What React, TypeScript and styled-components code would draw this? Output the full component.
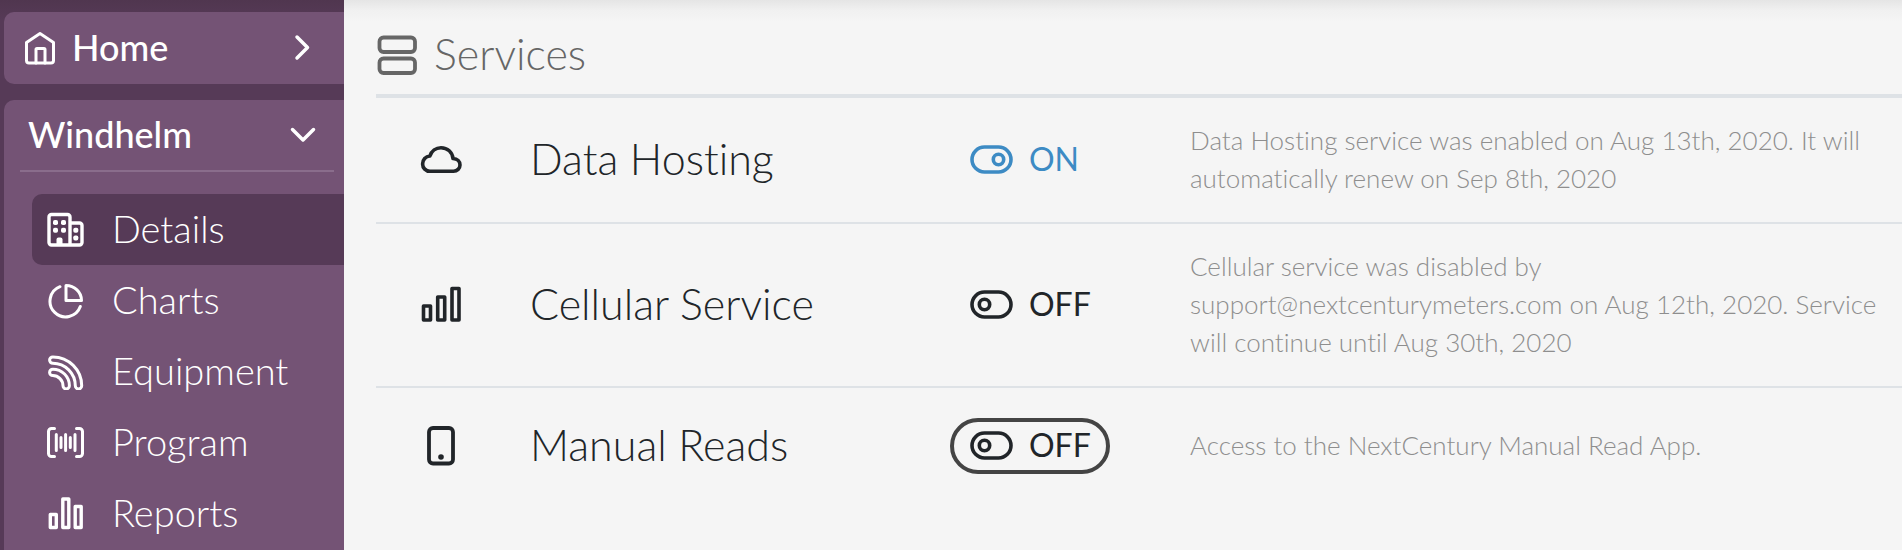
import React, { useState } from 'react';
import styled, { createGlobalStyle } from 'styled-components';

const color = {
  plum: '#563a57',
  mauve: '#745375',
  rule: '#8a6d8c',
  page: '#f5f5f5',
  border: '#dee2e6',
  ink: '#212529',
  heading: '#666666',
  muted: '#8e8e8e',
  on: '#3d8bc4',
  focus: '#444444',
};

const GlobalStyle = createGlobalStyle`
  *, *::before, *::after { box-sizing: border-box; }
  body {
    margin: 0;
    background: ${color.page};
    color: ${color.ink};
    font-family: Lato, "Open Sans", sans-serif;
    font-weight: 300;
    font-variant-ligatures: none;
  }
`;

const Page = styled.div`
  display: flex;
  min-height: 100vh;
`;

const Sidebar = styled.nav`
  flex: 0 0 344px;
  display: flex;
  flex-direction: column;
  gap: 16px;
  padding: 12px 0 0 4px;
  background: linear-gradient(#50364f, ${color.plum} 20px);
  color: #ffffff;
`;

const HomeLink = styled.a`
  display: flex;
  align-items: center;
  gap: 16px;
  height: 72px;
  padding: 0 34px 0 20px;
  border-radius: 10px 0 0 10px;
  background: ${color.mauve};
  color: inherit;
  font-size: 36px;
  font-weight: 500;
  text-decoration: none;
`;

const Label = styled.span<{ $grow?: boolean }>`
  flex: ${(p) => (p.$grow ? 1 : 'none')};
  padding-bottom: 3px;
`;

const Group = styled.section`
  flex: 1;
  border-radius: 10px 0 0 0;
  background: ${color.mauve};
`;

const GroupToggle = styled.button`
  display: flex;
  align-items: center;
  width: calc(100% - 26px);
  height: 72px;
  margin: 0 10px 22px 16px;
  padding: 0 17px 0 8px;
  border: 0;
  border-bottom: 2px solid ${color.rule};
  background: none;
  color: inherit;
  font-family: inherit;
  font-size: 36px;
  font-weight: 500;
  text-align: left;
  cursor: pointer;
`;

const NavList = styled.ul`
  margin: 0;
  padding: 0 0 0 28px;
  list-style: none;
`;

const NavLink = styled.a<{ $active?: boolean }>`
  display: flex;
  align-items: center;
  gap: 27px;
  height: 71px;
  padding: 0 13px;
  border-radius: 10px 0 0 10px;
  background: ${(p) => (p.$active ? color.plum : 'transparent')};
  color: inherit;
  font-size: 38px;
  text-decoration: none;
`;

const Main = styled.main`
  flex: 1;
  min-width: 0;
  padding: 18px 0 0 32px;
  background: linear-gradient(#e5e5e5, #f0f0f0 10px, ${color.page} 22px);
`;

const Heading = styled.h1`
  display: flex;
  align-items: center;
  gap: 16px;
  height: 80px;
  margin: 0;
  padding-bottom: 2px;
  border-bottom: 4px solid ${color.border};
  color: ${color.heading};
  font-size: 43px;
  font-weight: 300;
`;

const ServiceTable = styled.table`
  width: 100%;
  border-collapse: separate;
  border-spacing: 0;
  table-layout: fixed;
`;

const ServiceRow = styled.tr`
  height: 116px;
  &:not(:last-child) > * {
    border-bottom: 2px solid ${color.border};
  }
`;

const IconCell = styled.td`
  width: 130px;
  padding: 0;
  text-align: center;
  svg {
    display: block;
    margin: 0 auto;
  }
`;

const NameCell = styled.th`
  width: 420px;
  padding: 0 24px 4px;
  font-size: 43px;
  font-weight: 300;
  text-align: left;
`;

const StatusCell = styled.td`
  width: 240px;
  padding: 0 24px;
`;

const DetailCell = styled.td`
  padding: 23px 12px 25px 24px;
  color: ${color.muted};
  font-size: 26px;
  line-height: 38px;
`;

const Switch = styled.button<{ $on: boolean; $outlined?: boolean }>`
  display: flex;
  align-items: center;
  gap: 15px;
  width: 160px;
  height: 56px;
  padding: 0 16px;
  border: 4px solid ${(p) => (p.$outlined ? color.focus : 'transparent')};
  border-radius: 28px;
  background: none;
  color: ${(p) => (p.$on ? color.on : color.ink)};
  font-family: inherit;
  font-size: 32px;
  font-weight: 400;
  cursor: pointer;
`;

const Glyph = styled.svg<{ $weight?: number }>`
  flex: none;
  fill: none;
  stroke: currentColor;
  stroke-width: ${(p) => p.$weight ?? 3};
  stroke-linecap: round;
  stroke-linejoin: round;
`;

const HomeIcon = () => (
  <Glyph width="32" height="34" viewBox="0 0 32 34" aria-hidden="true">
    <path d="M2.500 11.500 16 2.500l13.500 9V29.500a2.500 2.500 0 0 1-2.500 2.500H5a2.500 2.500 0 0 1-2.500-2.500Z" />
    <path d="M12 32V18.500a1 1 0 0 1 1-1h7a1 1 0 0 1 1 1V32" />
  </Glyph>
);

const ChevronRight = () => (
  <Glyph $weight={3.5} width="16" height="28" viewBox="0 0 16 28" aria-hidden="true">
    <path d="M3 3 13.500 13.500 3 24" />
  </Glyph>
);

const ChevronDown = () => (
  <Glyph $weight={3.5} width="28" height="16" viewBox="0 0 28 16" aria-hidden="true">
    <path d="M3.500 2.500 14 13 24.500 2.500" />
  </Glyph>
);

const BuildingIcon = () => (
  <Glyph $weight={3.4} width="40" height="36" viewBox="0 0 40 36" aria-hidden="true">
    <path d="M25 33H6.500A2.500 2.500 0 0 1 4 30.500V5A2.500 2.500 0 0 1 6.500 2.500H22.500A2.500 2.500 0 0 1 25 5Zm0-22h9.500A2.500 2.500 0 0 1 37 13.500v17a2.500 2.500 0 0 1-2.500 2.500H25" />
    <path
      d="M11.500 34v-6.500a2 2 0 0 1 2-2h2a2 2 0 0 1 2 2V34Z"
      fill="currentColor"
      stroke="none"
    />
    <g fill="currentColor" stroke="none">
      <rect x="8" y="8" width="5" height="5" rx="1.800" />
      <rect x="16" y="8" width="5" height="5" rx="1.800" />
      <rect x="8" y="15.800" width="5" height="5" rx="1.800" />
      <rect x="16" y="15.800" width="5" height="5" rx="1.800" />
      <rect x="28.300" y="15.800" width="5" height="5" rx="1.800" />
      <rect x="28.300" y="23.500" width="5" height="5" rx="1.800" />
    </g>
  </Glyph>
);

const PieIcon = () => (
  <Glyph width="40" height="36" viewBox="0 0 40 36" aria-hidden="true">
    <path d="M15 3.700A15.600 15.600 0 1 0 35.300 23.500" />
    <path d="M21 2.500V17.500h15.500A15.500 15 0 0 0 21 2.500Z" />
  </Glyph>
);

const SignalIcon = () => (
  <Glyph width="40" height="36" viewBox="0 0 40 36" aria-hidden="true">
    <path d="M7.800 2.900A28.900 28.900 0 0 1 36.700 31.800a3.200 3.200 0 0 1-6.400 0A22.500 22.500 0 0 0 7.800 9.300a3.200 3.200 0 0 1 0-6.400Z" />
    <path d="M7.800 15.200A16.600 16.600 0 0 1 24.400 31.800a3.200 3.200 0 0 1-6.400 0A10.200 10.200 0 0 0 7.800 21.600a3.200 3.200 0 0 1 0-6.400Z" />
  </Glyph>
);

const BarcodeIcon = () => (
  <Glyph width="40" height="36" viewBox="0 0 40 36" aria-hidden="true">
    <path d="M9.500 3.500H6.500A3 3 0 0 0 3.500 6.500v22a3 3 0 0 0 3 3h3M31.500 3.500h3a3 3 0 0 1 3 3v22a3 3 0 0 1-3 3h-3M11.300 9.500v16M16 12.500v10M20.600 9.500v16M25.300 12.500v10M30 9.500v16" />
  </Glyph>
);

const ReportIcon = () => (
  <Glyph $weight={3.4} width="40" height="36" viewBox="0 0 40 36" aria-hidden="true">
    <path d="M5.300 18.500h6V31.500h-6ZM17.800 3h6v28.500h-6ZM30.200 10.500h6v21h-6Z" />
  </Glyph>
);

const ServerIcon = () => (
  <Glyph $weight={3.8} width="42" height="40" viewBox="0 0 42 40" aria-hidden="true">
    <rect x="3.500" y="2.500" width="35.500" height="14.500" rx="4" />
    <rect x="3.500" y="23.500" width="35.500" height="14.500" rx="4" />
  </Glyph>
);

const CloudIcon = () => (
  <Glyph $weight={3.6} width="44" height="30" viewBox="0 0 44 30" aria-hidden="true">
    <path d="M11 26.300C6.800 26.300 3.600 23 3.600 18.900 3.600 14.800 6.600 11.300 10.900 11 12.500 6 17 2.700 22 2.700 28.500 2.700 33.500 7.200 34 13.500 38.500 13.700 41 16.500 41 19.900 41 23.300 38.200 26.300 34.500 26.300Z" />
  </Glyph>
);

const BarsIcon = () => (
  <Glyph $weight={3.6} width="42" height="38" viewBox="0 0 42 38" aria-hidden="true">
    <path d="M3.500 20h7v14h-7ZM17.700 11h7v23h-7ZM32 2.500h7v31.500h-7Z" />
  </Glyph>
);

const PhoneIcon = () => (
  <Glyph $weight={3.800} width="30" height="40" viewBox="0 0 30 40" aria-hidden="true">
    <rect x="3" y="2" width="24" height="35.500" rx="4" />
    <circle cx="15" cy="31" r="2.800" fill="currentColor" stroke="none" />
  </Glyph>
);

const SwitchIcon = ({ on }: { on: boolean }) => (
  <Glyph $weight={3.6} width="44" height="30" viewBox="0 0 44 30" aria-hidden="true">
    <rect x="2" y="2" width="39" height="25" rx="12.500" />
    <circle cx={on ? 28.5 : 14.5} cy="14.500" r="5.200" />
  </Glyph>
);

const navItems = [
  { label: 'Details', Icon: BuildingIcon },
  { label: 'Charts', Icon: PieIcon },
  { label: 'Equipment', Icon: SignalIcon },
  { label: 'Program', Icon: BarcodeIcon },
  { label: 'Reports', Icon: ReportIcon },
];

const services = [
  {
    name: 'Data Hosting',
    Icon: CloudIcon,
    enabled: true,
    detail: 'Data Hosting service was enabled on Aug 13th, 2020. It will automatically renew on Sep 8th, 2020',
  },
  {
    name: 'Cellular Service',
    Icon: BarsIcon,
    enabled: false,
    detail:
      'Cellular service was disabled by support@nextcenturymeters.com on Aug 12th, 2020. Service will continue until Aug 30th, 2020',
  },
  {
    name: 'Manual Reads',
    Icon: PhoneIcon,
    enabled: false,
    outlined: true,
    detail: 'Access to the NextCentury Manual Read App.',
  },
];

export default function App() {
  const [enabled, setEnabled] = useState(services.map((s) => s.enabled));
  const [open, setOpen] = useState(true);
  const flip = (index: number) => setEnabled(enabled.map((on, i) => (i === index ? !on : on)));

  return (
    <Page>
      <GlobalStyle />
      <Sidebar>
        <HomeLink href="#home">
          <HomeIcon />
          <Label $grow>Home</Label>
          <ChevronRight />
        </HomeLink>
        <Group>
          <GroupToggle type="button" aria-expanded={open} onClick={() => setOpen(!open)}>
            <Label $grow>Windhelm</Label>
            <ChevronDown />
          </GroupToggle>
          {open && (
            <NavList>
              {navItems.map(({ label, Icon }, i) => (
                <li key={label}>
                  <NavLink href={`#${label.toLowerCase()}`} $active={i === 0}>
                    <Icon />
                    <Label>{label}</Label>
                  </NavLink>
                </li>
              ))}
            </NavList>
          )}
        </Group>
      </Sidebar>
      <Main>
        <Heading>
          <ServerIcon />
          <Label>Services</Label>
        </Heading>
        <ServiceTable>
          <tbody>
            {services.map(({ name, Icon, detail, outlined }, i) => (
              <ServiceRow key={name}>
                <IconCell>
                  <Icon />
                </IconCell>
                <NameCell scope="row">{name}</NameCell>
                <StatusCell>
                  <Switch
                    type="button"
                    role="switch"
                    aria-checked={enabled[i]}
                    aria-label={`${name} ${enabled[i] ? 'ON' : 'OFF'}`}
                    $on={enabled[i]}
                    $outlined={outlined}
                    onClick={() => flip(i)}
                  >
                    <SwitchIcon on={enabled[i]} />
                    <Label>{enabled[i] ? 'ON' : 'OFF'}</Label>
                  </Switch>
                </StatusCell>
                <DetailCell>{detail}</DetailCell>
              </ServiceRow>
            ))}
          </tbody>
        </ServiceTable>
      </Main>
    </Page>
  );
}
